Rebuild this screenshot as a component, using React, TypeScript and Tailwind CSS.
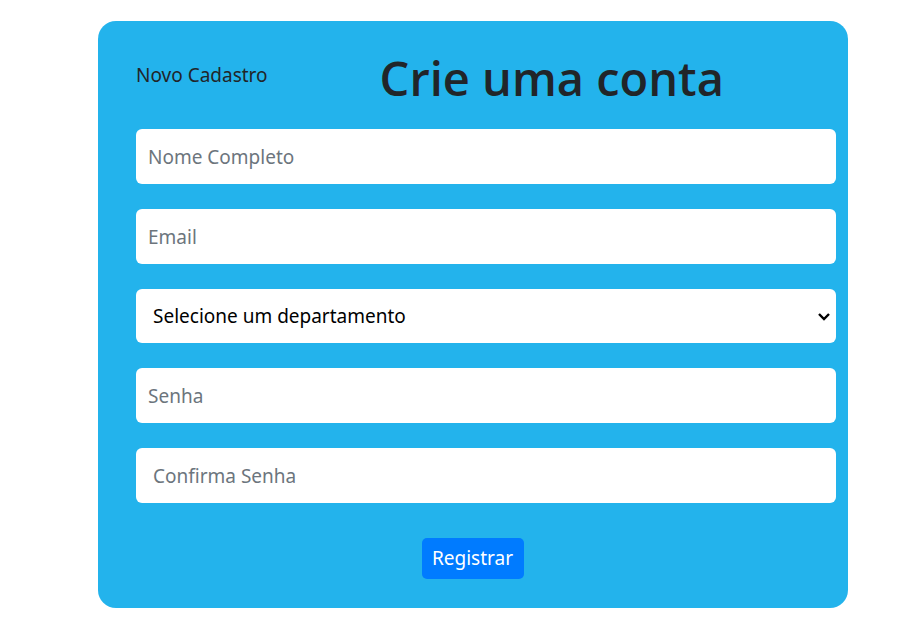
import React from "react";

export default function App() {
  const font = { fontFamily: '"Noto Sans", "Open Sans", sans-serif' };
  return (
    <div className="min-h-screen w-full bg-white pt-[21px] pl-[98px]" style={font}>
      <div className="w-[750px] rounded-[18px] bg-[#23b3ec] pl-[38px] pr-[12px] pt-[27px] pb-[29px]">
        <div className="flex h-[60px] items-center mb-[21px]">
          <div className="text-[19px] text-[#212529] leading-none mt-[-6px]">Novo Cadastro</div>
          <h1
            className="flex-1 text-center text-[47px] font-semibold text-[#212529] leading-none"
            style={{ fontFamily: '"Open Sans", "Noto Sans", sans-serif' }}
          >
            Crie uma conta
          </h1>
        </div>
        <form className="flex flex-col gap-[25px]" onSubmit={(e) => e.preventDefault()}>
          <input
            className="h-[55px] w-full rounded-md bg-white px-[12px] text-[19px] text-[#212529] placeholder-[#6c757d] outline-none"
            placeholder="Nome Completo"
          />
          <input
            className="h-[55px] w-full rounded-md bg-white px-[12px] text-[19px] text-[#212529] placeholder-[#6c757d] outline-none"
            placeholder="Email"
          />
          <div className="relative h-[54px]">
            <select
              className="h-[54px] w-full appearance-none rounded-md bg-white pl-[17px] pr-[30px] text-[19px] text-black outline-none"
              defaultValue=""
            >
              <option value="">Selecione um departamento</option>
            </select>
            <svg
              className="pointer-events-none absolute right-[5px] top-[22px]"
              width="14"
              height="10"
              viewBox="0 0 14 10"
            >
              <path d="M2 3 L7 8 L12 3" stroke="#000" strokeWidth="2.4" fill="none" />
            </svg>
          </div>
          <input
            type="password"
            className="h-[55px] w-full rounded-md bg-white px-[12px] text-[19px] text-[#212529] placeholder-[#6c757d] outline-none"
            placeholder="Senha"
          />
          <input
            type="password"
            className="h-[55px] w-full rounded-md bg-white px-[17px] text-[19px] text-[#212529] placeholder-[#6c757d] outline-none"
            placeholder="Confirma Senha"
          />
          <div className="flex justify-center pt-[10px]">
            <button
              type="submit"
              className="h-[41px] w-[102px] rounded-[5px] bg-[#007bff] text-[19px] text-white ml-[-27px]"
            >
              Registrar
            </button>
          </div>
        </form>
      </div>
    </div>
  );
}
